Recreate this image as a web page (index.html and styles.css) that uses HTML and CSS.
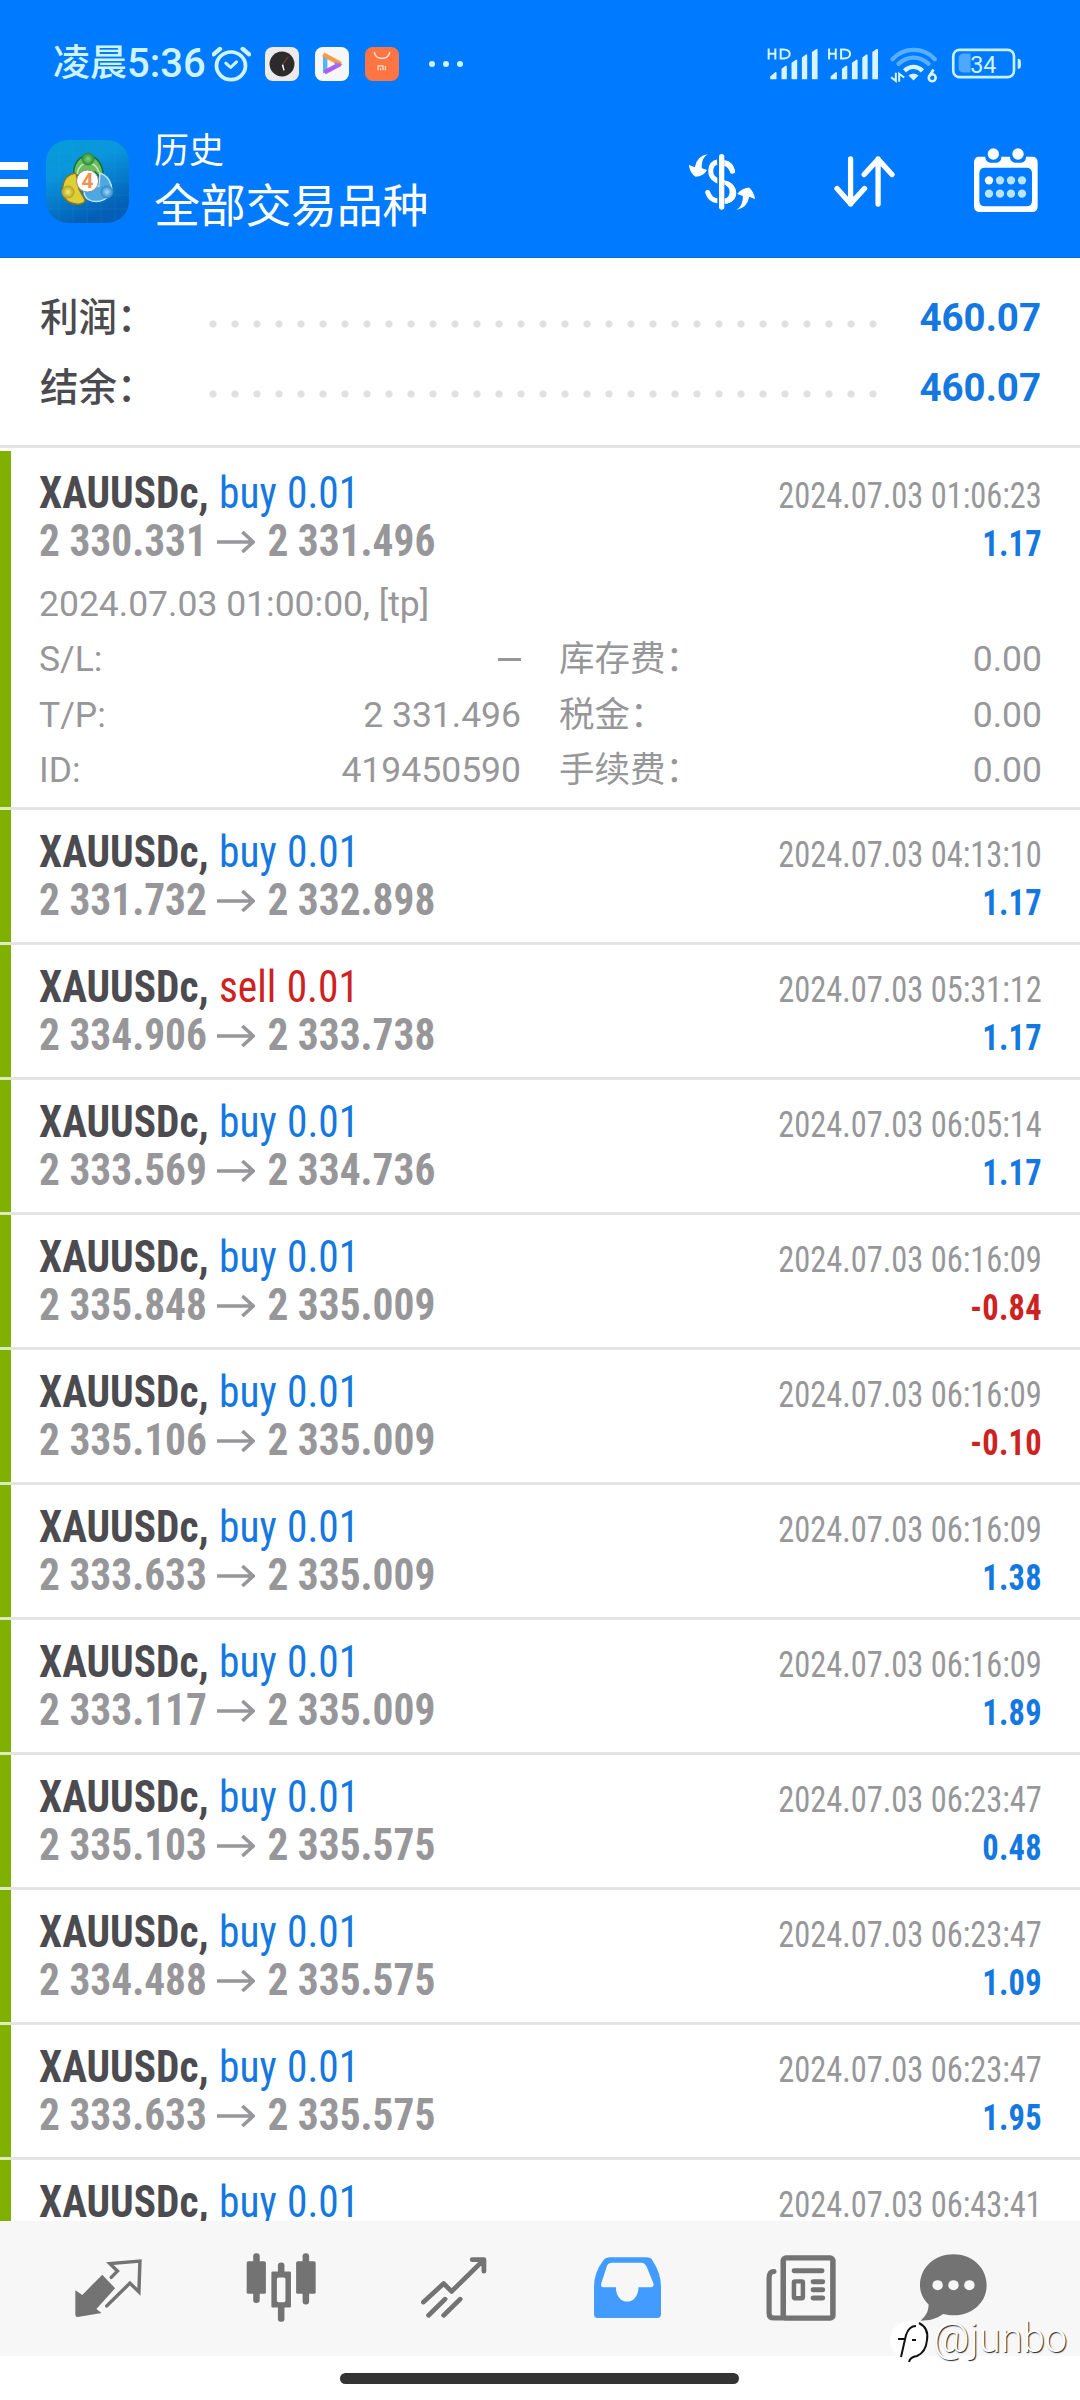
FILE: index.html
```html
<!DOCTYPE html>
<html lang="zh-CN">
<head>
<meta charset="utf-8">
<title>历史</title>
<link rel="stylesheet" href="styles.css">
</head>
<body>
<svg class="defs" width="0" height="0" aria-hidden="true">
  <symbol id="arrow" viewBox="0 0 39 22" preserveAspectRatio="none"><path d="M0 11h37M26 1l11 10-11 10" fill="none" stroke="#97979a" stroke-width="3.6"/></symbol>
</svg>
<div class="screen">
  <header class="header">
    <div class="status">
      <span class="status-cjk">凌晨</span><span class="status-time">5:36</span>
      <svg class="status-alarm" viewBox="617 77 113 109" preserveAspectRatio="none"><g fill="none" stroke="#cdf3ff" stroke-linecap="round"><circle cx="672" cy="137" r="42" stroke-width="11"/><path d="M622 102l18-16M706 86l18 16" stroke-width="13"/><path d="M657 129l14 13 17-17" stroke-width="9" stroke-linejoin="round"/></g></svg>
      <svg class="status-app" viewBox="0 0 35 35"><rect width="35" height="35" rx="8" fill="#ecebe9"/><circle cx="17.5" cy="17.5" r="12.8" fill="#2b2b2d"/><path d="M18 18l1.500 6" stroke="#fff" stroke-width="1.500"/><path d="M18 18l6-8" stroke="#a33a35" stroke-width="1"/></svg>
      <svg class="status-app" viewBox="0 0 35 35"><rect width="35" height="35" rx="8" fill="#f7f6f8"/><path d="M10.500 8v19" stroke="#58b4f2" stroke-width="4.500"/><path d="M10 26l16-8.500" stroke="#b05cf0" stroke-width="4.500"/><path d="M8.500 7.500l18 10" stroke="#f79a4c" stroke-width="4.500"/><path d="M20 16l8.500 1.500-7 4.500z" fill="#9d6ff0"/></svg>
      <svg class="status-app" viewBox="0 0 35 35"><rect width="35" height="35" rx="8" fill="#ff7443"/><path d="M9.500 5c1 9 15 9 16 0" fill="none" stroke="#ffe4d8" stroke-width="1.600"/><path d="M13.500 24v-4.500h5V24M16 21.500V24M21 19.500V24" fill="none" stroke="#ffe4d8" stroke-width="1.300"/></svg>
      <svg class="status-more" viewBox="0 0 34 6"><g fill="#cdf3ff"><circle cx="3" cy="3" r="3"/><circle cx="17" cy="3" r="3"/><circle cx="31" cy="3" r="3"/></g></svg>
      <svg class="status-right" viewBox="82 80 764 110">
        <g fill="#d8f5ff" stroke="#d8f5ff">
          <g id="sig"><path d="M94 172l14-12v17H94zM128 149l11-8v36h-11zM158 131l12-8v54h-12zM189 115l11-8v70h-11zM219 99l12-8v86h-12z" stroke-width="5" stroke-linejoin="round"/><path d="M87 87v33M87 103h20M107 87v33" fill="none" stroke-width="6"/><path d="M123 90h9c24 0 24 27 0 27h-9z" fill="none" stroke-width="6"/></g>
          <use href="#sig" x="181"/>
        </g>
        <g fill="none" stroke-linecap="round"><path d="M458 119c34-37 93-37 127 0" stroke="#57afff" stroke-width="13"/><path d="M476 133c26-25 64-25 90 0" stroke="#57afff" stroke-width="13"/></g>
        <path d="M494 154c16-16 38-16 54 0" fill="none" stroke="#d8f5ff" stroke-width="13"/>
        <path d="M506 168c9-7 21-7 30 0l-15 15z" fill="#d8f5ff"/>
        <path d="M454 173l14 11v-24M478 187v-24l15 11" fill="none" stroke="#d8f5ff" stroke-width="6"/>
        <path d="M581 150l-13 21" stroke="#d8f5ff" stroke-width="8"/><circle cx="577" cy="175" r="10.500" fill="none" stroke="#d8f5ff" stroke-width="7.500"/>
        <rect x="640" y="91" width="182" height="82" rx="19" fill="none" stroke="#c8f1ff" stroke-width="8"/>
        <path d="M672 102h20v57h-20q-16 0-16-16v-25q0-16 16-16z" fill="#4fa8ff"/>
        <path d="M833 118q10 0 10 10v10q0 10-10 10z" fill="#c8f1ff"/>
        <text x="730" y="159" text-anchor="middle" class="battery">34</text>
      </svg>
    </div>
    <div class="appbar">
      <div class="menu"><i></i><i></i><i></i></div>
      <svg class="logo" viewBox="0 0 83 83">
        <defs>
          <linearGradient id="bg" x1="0" y1="0" x2=".4" y2="1"><stop offset="0" stop-color="#069cd8"/><stop offset=".4" stop-color="#0a96dc"/><stop offset="1" stop-color="#045eb6"/></linearGradient>
          <radialGradient id="g1"><stop offset="0" stop-color="#8ed07a"/><stop offset="1" stop-color="#1f8a36"/></radialGradient>
          <radialGradient id="g2"><stop offset="0" stop-color="#f7ec73"/><stop offset="1" stop-color="#b3a01b"/></radialGradient>
          <radialGradient id="g3"><stop offset="0" stop-color="#a5dcfa"/><stop offset="1" stop-color="#2983c4"/></radialGradient>
        </defs>
        <rect width="83" height="83" rx="22" fill="url(#bg)"/>
        <path d="M13 2v79M27 0v83M41 0v83M55 0v83M69 2v79M2 13h79M0 27h83M0 41h83M0 55h83M2 69h79" stroke="#29b4ed" stroke-opacity=".15"/>
        <path d="M28 38c-4-30 32-30 29 2l-8-8-13 1z" fill="#6cbd5d" stroke="#176b35" stroke-width="1.500"/>
        <path d="M30 33c-17 2-16 25-7 29 8 4 16 2 16-2l-6-11z" fill="#ddcf35" stroke="#84781d" stroke-width="1.500"/>
        <path d="M54 33c12 4 15 20 8 24-10 8-24 5-24-6l15-5z" fill="#4da7e2" stroke="#b9e5fa" stroke-width="1.500"/>
        <path d="M31 34c2-14 18-15 22-2" fill="none" stroke="#c9efb2" stroke-width="1.500"/>
        <circle cx="42" cy="19" r="6.500" fill="url(#g1)"/><circle cx="22" cy="52" r="6.500" fill="url(#g2)"/><circle cx="61" cy="52" r="6.500" fill="url(#g3)"/>
        <circle cx="41.500" cy="41" r="11" fill="#fff" stroke="#9a8a70" stroke-width="1"/>
        <text x="41.500" y="48" text-anchor="middle" class="logo-num">4</text>
      </svg>
      <div class="titles"><div class="title-small">历史</div><div class="title-big">全部交易品种</div></div>
      <svg class="ic-money" viewBox="147 129 198 169">
        <g fill="none" stroke="#fff" stroke-width="15"><path d="M232 153c-24 5-28 42-3 55l15 8"/><path d="M250 155q21 3 28 26" stroke-linecap="round"/><path d="M250 215c42 8 41 55 3 57"/><path d="M232 270q-22-2-29-25" stroke-linecap="round"/></g>
        <path d="M245 130v166" stroke="#007aff" stroke-width="26"/><path d="M245 137v152" stroke="#fff" stroke-width="16" stroke-linecap="round"/>
        <path d="M252 208c48 8 48 68 2 71v-16c20-2 20-36 0-41zM253 147q28 4 32 36l-13 5q-6-20-19-23z" fill="#fff"/>
        <path d="M204 129c-15 8-20 25-19 43l16 5q-11 19-35 21-18-13-20-36l18 7q6-35 40-40z" fill="#fff"/>
        <path d="M289 298c15-8 20-24 20-42l-17-6q12-18 36-20 14 13 18 35l-18-7q-5 33-39 40z" fill="#fff"/>
      </svg>
      <svg class="ic-sort" viewBox="584 136 182 154"><path d="M633 145v136M592 234l41 46 42-46M716 281V145M674 192l42-46 42 46" fill="none" stroke="#fff" stroke-width="16" stroke-linecap="round" stroke-linejoin="round"/></svg>
      <svg class="ic-cal" viewBox="1005 112 192 192">
        <path fill="#fff" fill-rule="evenodd" d="M1021 138h18c0 12 8 18 20 18h8c14 0 20-6 20-18h26c0 12 8 18 20 18h8c14 0 20-6 20-18h18q17 0 17 17v131q0 18-18 18h-155q-18 0-18-18V155q0-17 16-17zM1038 171q-17 0-17 17v82q0 17 17 17h124q17 0 17-17v-82q0-17-17-17z"/>
        <g fill="#fff"><circle cx="1063" cy="130" r="17"/><circle cx="1137" cy="130" r="17"/><circle cx="1050" cy="209" r="12.500"/></g>
        <g fill="#b9e4ff"><circle cx="1083" cy="209" r="12.500"/><circle cx="1116" cy="209" r="12.500"/><circle cx="1149" cy="209" r="12.500"/><circle cx="1050" cy="249" r="12.500"/><circle cx="1083" cy="249" r="12.500"/><circle cx="1116" cy="249" r="12.500"/><circle cx="1149" cy="249" r="12.500"/></g>
      </svg>
    </div>
  </header>

  <section class="summary">
    <div class="sum-row"><span class="sum-label">利润：</span><span class="dots"></span><b class="sum-value">460.07</b></div>
    <div class="sum-row"><span class="sum-label">结余：</span><span class="dots"></span><b class="sum-value">460.07</b></div>
  </section>

  <main class="deals">
    <article class="deal open">
      <div class="deal-main">
        <div class="lead"><div class="name"><b>XAUUSDc,</b> <span class="buy">buy 0.01</span></div><div class="price"><span>2 330.331</span><svg class="arr"><use href="#arrow"/></svg><span>2 331.496</span></div></div>
        <div class="side"><div class="time">2024.07.03 01:06:23</div><div class="profit">1.17</div></div>
      </div>
      <div class="detail">
        <div class="note">2024.07.03 01:00:00, [tp]</div>
        <div class="pair"><span>S/L:</span><span class="dash"></span></div><div class="pair"><span>库存费：</span><span>0.00</span></div>
        <div class="pair"><span>T/P:</span><span>2 331.496</span></div><div class="pair"><span>税金：</span><span>0.00</span></div>
        <div class="pair"><span>ID:</span><span>419450590</span></div><div class="pair"><span>手续费：</span><span>0.00</span></div>
      </div>
    </article>
    <article class="deal"><div class="deal-main"><div class="lead"><div class="name"><b>XAUUSDc,</b> <span class="buy">buy 0.01</span></div><div class="price"><span>2 331.732</span><svg class="arr"><use href="#arrow"/></svg><span>2 332.898</span></div></div><div class="side"><div class="time">2024.07.03 04:13:10</div><div class="profit">1.17</div></div></div></article>
    <article class="deal"><div class="deal-main"><div class="lead"><div class="name"><b>XAUUSDc,</b> <span class="sell">sell 0.01</span></div><div class="price"><span>2 334.906</span><svg class="arr"><use href="#arrow"/></svg><span>2 333.738</span></div></div><div class="side"><div class="time">2024.07.03 05:31:12</div><div class="profit">1.17</div></div></div></article>
    <article class="deal"><div class="deal-main"><div class="lead"><div class="name"><b>XAUUSDc,</b> <span class="buy">buy 0.01</span></div><div class="price"><span>2 333.569</span><svg class="arr"><use href="#arrow"/></svg><span>2 334.736</span></div></div><div class="side"><div class="time">2024.07.03 06:05:14</div><div class="profit">1.17</div></div></div></article>
    <article class="deal"><div class="deal-main"><div class="lead"><div class="name"><b>XAUUSDc,</b> <span class="buy">buy 0.01</span></div><div class="price"><span>2 335.848</span><svg class="arr"><use href="#arrow"/></svg><span>2 335.009</span></div></div><div class="side"><div class="time">2024.07.03 06:16:09</div><div class="profit loss">-0.84</div></div></div></article>
    <article class="deal"><div class="deal-main"><div class="lead"><div class="name"><b>XAUUSDc,</b> <span class="buy">buy 0.01</span></div><div class="price"><span>2 335.106</span><svg class="arr"><use href="#arrow"/></svg><span>2 335.009</span></div></div><div class="side"><div class="time">2024.07.03 06:16:09</div><div class="profit loss">-0.10</div></div></div></article>
    <article class="deal"><div class="deal-main"><div class="lead"><div class="name"><b>XAUUSDc,</b> <span class="buy">buy 0.01</span></div><div class="price"><span>2 333.633</span><svg class="arr"><use href="#arrow"/></svg><span>2 335.009</span></div></div><div class="side"><div class="time">2024.07.03 06:16:09</div><div class="profit">1.38</div></div></div></article>
    <article class="deal"><div class="deal-main"><div class="lead"><div class="name"><b>XAUUSDc,</b> <span class="buy">buy 0.01</span></div><div class="price"><span>2 333.117</span><svg class="arr"><use href="#arrow"/></svg><span>2 335.009</span></div></div><div class="side"><div class="time">2024.07.03 06:16:09</div><div class="profit">1.89</div></div></div></article>
    <article class="deal"><div class="deal-main"><div class="lead"><div class="name"><b>XAUUSDc,</b> <span class="buy">buy 0.01</span></div><div class="price"><span>2 335.103</span><svg class="arr"><use href="#arrow"/></svg><span>2 335.575</span></div></div><div class="side"><div class="time">2024.07.03 06:23:47</div><div class="profit">0.48</div></div></div></article>
    <article class="deal"><div class="deal-main"><div class="lead"><div class="name"><b>XAUUSDc,</b> <span class="buy">buy 0.01</span></div><div class="price"><span>2 334.488</span><svg class="arr"><use href="#arrow"/></svg><span>2 335.575</span></div></div><div class="side"><div class="time">2024.07.03 06:23:47</div><div class="profit">1.09</div></div></div></article>
    <article class="deal"><div class="deal-main"><div class="lead"><div class="name"><b>XAUUSDc,</b> <span class="buy">buy 0.01</span></div><div class="price"><span>2 333.633</span><svg class="arr"><use href="#arrow"/></svg><span>2 335.575</span></div></div><div class="side"><div class="time">2024.07.03 06:23:47</div><div class="profit">1.95</div></div></div></article>
    <article class="deal"><div class="deal-main"><div class="lead"><div class="name"><b>XAUUSDc,</b> <span class="buy">buy 0.01</span></div></div><div class="side"><div class="time">2024.07.03 06:43:41</div></div></div></article>
  </main>

  <nav class="tabs">
    <svg width="67" height="59" viewBox="218 356 194 176" preserveAspectRatio="none"><path fill="#737373" d="M219 452l20 14 58-60 37 40-54 62 15 12-69 12q-7 0-7-8z"/><path d="M311 498l67-68 26 26 3-92-87 8 22 22-18 19" transform="translate(-1 1)" fill="none" stroke="#737373" stroke-width="10" stroke-linecap="round"/></svg>
    <svg width="70" height="69" viewBox="714 341 204 206" preserveAspectRatio="none"><g fill="#737373"><rect x="716" y="366" width="56" height="97" rx="5"/><rect x="860" y="366" width="57" height="97" rx="5"/><rect x="735" y="342" width="19" height="148" rx="9"/><rect x="879" y="342" width="19" height="153" rx="9"/><rect x="807" y="369" width="19" height="35" rx="9"/><rect x="807" y="495" width="19" height="51" rx="8"/><path fill-rule="evenodd" d="M792 396h49q4 0 4 4v100q0 4-4 4h-49q-4 0-4-4V400q0-4 4-4zm17 18q-5 0-5 5v64q0 5 5 5h15q5 0 5-5v-64q0-5-5-5z"/></g></svg>
    <svg width="66" height="61" viewBox="1223 349 192 184" preserveAspectRatio="none"><path d="M1230 485l59-56 23 24 92-94M1372 357h34v35M1245 525l48-49M1289 525l48-49" fill="none" stroke="#737373" stroke-width="14" stroke-linecap="round" stroke-linejoin="round"/></svg>
    <svg width="67" height="61" viewBox="158 349 193 184" preserveAspectRatio="none"><path fill="#429cff" fill-rule="evenodd" d="M205 350h104q12 0 18 10 24 38 24 78v84q0 11-11 11H169q-11 0-11-11v-84q0-42 26-78 8-10 21-10zm3 16q-8 0-12 8l-17 54q-3 12 6 12h36c0 58 65 58 65 0h36q10 0 7-12l-19-49q-5-13-16-13z"/></svg>
    <svg width="70" height="66" viewBox="656 341 203 200" preserveAspectRatio="none"><g fill="none" stroke="#737373"><rect x="706" y="350" width="144" height="182" rx="8" stroke-width="16"/><path d="M710 532h-31q-14 0-14-14V411q0-20 14-20" stroke-width="15" stroke-linecap="round"/><path d="M738 389h80M793 422h27M793 446h27M793 471h27" stroke-width="15" stroke-linecap="round"/><rect x="737" y="421" width="26" height="51" rx="3" stroke-width="13"/></g></svg>
    <svg width="67" height="67" viewBox="1102 341 194 200" preserveAspectRatio="none"><path fill="#737373" d="M1199 342c53 0 96 39 96 92 0 58-54 104-126 86-21 15-40 20-65 20 14-14 22-24 23-48-16-16-25-36-25-58 0-53 43-92 97-92z"/><g fill="#f7f7f7"><circle cx="1153" cy="434" r="15"/><circle cx="1199" cy="434" r="15"/><circle cx="1245" cy="434" r="15"/></g></svg>
  </nav>
  <div class="gesture"><span></span></div>

  <div class="mark">
    <svg width="42" height="46" viewBox="0 0 42 46"><circle cx="19" cy="21" r="19" fill="#fff"/><path d="M8 20h8M11 38l5-22Q19 7 26 7M22 21h4M29 4q10 5 8 17-1 12-10 16-7 1-8 6" fill="none" stroke="#111" stroke-width="2"/></svg>
    <span>@junbo</span>
  </div>
</div>
</body>
</html>
```
FILE: styles.css
```css
* { box-sizing: border-box; }
body { margin: 0; background: #fff; font-family: Roboto, "Noto Sans CJK SC", sans-serif; }
svg { display: block; flex: none; }
.defs { position: absolute; }
.screen { position: relative; width: 1080px; height: 2400px; overflow: hidden; display: flex; flex-direction: column; }

.header { height: 258px; flex: none; background: #007aff; border-bottom: 1px solid #066bd6; }
.status { height: 128px; padding-left: 53px; display: flex; align-items: center; color: #cdf3ff; white-space: nowrap; }
.status-cjk { font-size: 37px; font-weight: 500; line-height: 44px; }
.status-time { font-size: 40px; font-weight: 500; line-height: 44px; width: 85px; }
.status-alarm { width: 39px; height: 36px; }
.status-app { width: 34px; height: 34px; margin-left: 16px; }
.status-alarm + .status-app { margin-left: 14px; }
.status-more { width: 34px; height: 6px; margin-left: 30px; }
.status-right { width: 255px; height: 37px; margin-left: 304px; }
.battery { font-size: 70px; fill: #d0f3ff; }

.appbar { height: 107px; display: flex; align-items: center; }
.menu { width: 28px; display: grid; gap: 9px; margin-top: 2px; }
.menu i { height: 8px; background: #fff; }
.logo { width: 83px; height: 83px; margin-left: 18px; }
.logo-num { font: bold 21px Roboto, sans-serif; fill: #ef9150; }
.titles { margin: 0 0 9px 25px; width: 508px; color: #fff; font-family: "Noto Sans CJK SC", sans-serif; }
.title-small { font-size: 35px; line-height: 50px; }
.title-big { font-size: 46px; line-height: 58px; letter-spacing: -.3px; }
.ic-money { width: 66px; height: 56px; margin-left: 27px; }
.ic-sort { width: 61px; height: 51px; margin-left: 79px; }
.ic-cal { width: 64px; height: 64px; margin: 0 0 4px 79px; }

.summary { height: 190px; flex: none; padding: 25px 39px 0 40px; border-bottom: 3px solid #e4e4e4; }
.sum-row { height: 70px; display: flex; align-items: center; line-height: 70px; }
.sum-label { width: 162px; font-size: 38.5px; font-weight: 500; color: #4b4b4f; white-space: nowrap; }
.dots { width: 682px; height: 8px; margin-top: 12px; background: radial-gradient(circle at 11px 4px, #e0e0e0 3.2px, transparent 4px) 0 0 / 22px 8px repeat-x; }
.sum-value { margin-left: auto; font-size: 38.5px; color: #1478e0; }

.deals { height: 1773px; flex: none; padding-top: 3px; overflow: hidden; }
.deal { height: 135px; padding: 0 38px 0 28px; border-left: 11px solid #80b000; background: linear-gradient(#e4e4e4, #e4e4e4) 0 100% / 100% 3px no-repeat; position: relative; }
.deal::after { content: ""; position: absolute; left: -11px; bottom: 0; width: 11px; height: 3px; background: #dcebbf; }
.deal.open { height: 359px; }
.deal-main { display: flex; justify-content: space-between; font-family: "Roboto Condensed", Roboto, sans-serif; white-space: nowrap; }
/* Both halves of a row are set slightly narrower than the condensed face. */
.lead { transform: scaleX(.94); transform-origin: left; }
.side { transform: scaleX(.9); transform-origin: right; padding-top: 21px; text-align: right; }
.name { padding-top: 18px; font-size: 44px; line-height: 48px; height: 66px; color: #4b4b50; word-spacing: 1px; }
.buy { color: #1478e0; }
.sell { color: #cc2222; }
.price { height: 48px; display: flex; align-items: center; font-size: 44px; line-height: 48px; font-weight: bold; color: #97979a; }
.price span:first-child { width: 189px; }
.arr { width: 41px; height: 22px; margin: 2px 13px 0 0; }
.time { font-size: 36px; line-height: 48px; height: 48px; color: #97979a; }
.profit { font-size: 36px; line-height: 48px; font-weight: bold; color: #1478e0; letter-spacing: .3px; }
.profit.loss { color: #cc2222; }
.detail { margin-top: 8.5px; display: grid; grid-template-columns: 482px 483px; column-gap: 38px; font-size: 35.5px; line-height: 55.5px; color: #97979a; }
.note { grid-column: 1 / 3; }
.pair { display: flex; justify-content: space-between; align-items: center; height: 55.5px; }
.dash { width: 23px; height: 3px; background: #97979a; }

.tabs { height: 135px; flex: none; padding: 0 0 2px 22px; background: #f7f7f7; display: grid; grid-template-columns: 173px 172px 174px 173px 173px 132px; align-items: center; justify-items: center; }
.gesture { display: flex; justify-content: center; padding: 17px 1px 0 0; }
.gesture span { width: 399px; height: 11px; border-radius: 6px; background: #333; }
.mark { position: absolute; left: 890px; top: 2319px; display: flex; align-items: center; color: #fff; font-size: 40px; font-weight: 300; line-height: 46px; text-shadow: 1px 1px 1px #222; }
.mark span { margin: -7px 0 0 1px; }
```
